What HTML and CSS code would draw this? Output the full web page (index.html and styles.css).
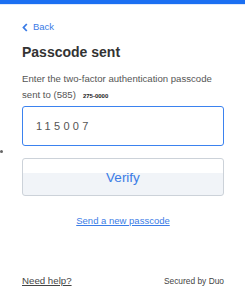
FILE: index.html
```html
<!DOCTYPE html>
<html>
<head>
<meta charset="utf-8">
<link rel="stylesheet" href="styles.css">
</head>
<body>
<div class="topbar"></div>
<div class="page">
  <span class="dot"></span>
  <a class="back" href="#"><svg class="chev" width="6" height="9" viewBox="0 0 6 9"><path d="M4.8 1 L1.5 4.5 L4.8 8" fill="none" stroke="#3b7ce6" stroke-width="1.8"/></svg>Back</a>
  <h1 class="title">Passcode sent</h1>
  <div class="desc">
    <div class="line">Enter the two-factor authentication passcode</div>
    <div class="line row"><span>sent to (585)</span><span class="num">275-0000</span></div>
  </div>
  <div class="input">115007</div>
  <button class="verify">Verify</button>
  <div class="resend"><a href="#">Send a new passcode</a></div>
  <div class="footer">
    <a class="help" href="#">Need help?</a>
    <span class="secured">Secured by Duo</span>
  </div>
</div>
</body>
</html>
```
FILE: styles.css
```css
html, body { margin: 0; padding: 0; background: #fff; }
body { font-family: "Liberation Sans", Arial, sans-serif; width: 245px; height: 300px; overflow: hidden; }
.topbar { height: 4px; background: #1b6ff2; border-bottom: 1px solid #dfe9fb; }
.page { position: relative; padding: 0 21px 0 22px; display: flex; flex-direction: column; height: 295px; box-sizing: border-box; }
.dot { position: absolute; left: 0; top: 145px; width: 3px; height: 3px; border-radius: 50%; background: #666; }
.back { margin-top: 16px; display: flex; align-items: center; gap: 5px; color: #3b7ce6; text-decoration: none; font-size: 9.5px; line-height: 12px; }
.title { margin: 11px 0 0; font-size: 14px; line-height: 16px; font-weight: bold; color: #333; }
.desc { margin: 11px 0 0; font-size: 9.6px; line-height: 16px; color: #555; }
.line { height: 16px; white-space: nowrap; }
.row { display: flex; align-items: baseline; gap: 7px; }
.num { font-size: 6px; font-weight: bold; color: #222; }
.input { margin-top: 3px; height: 40px; box-sizing: border-box; border: 1px solid #3b82ef; border-radius: 3px; padding-left: 13px; display: flex; align-items: center; font-size: 11px; letter-spacing: 3.3px; color: #555; }
.verify { margin-top: 12px; height: 38px; width: 100%; border: 1px solid #ccd2d9; border-radius: 3px; background: linear-gradient(#fff 0, #fff 40%, #f1f4f8 40%, #f1f4f8 100%); color: #3b7ce6; font-family: inherit; font-size: 13.5px; }
.resend { margin-top: 19px; text-align: center; font-size: 9.5px; line-height: 12px; }
.resend a { color: #3b7ce6; }
.footer { margin-top: auto; margin-bottom: 13px; display: flex; justify-content: space-between; align-items: center; line-height: 12px; }
.help { color: #444; font-size: 9.7px; }
.secured { color: #444; font-size: 8.4px; }
```
